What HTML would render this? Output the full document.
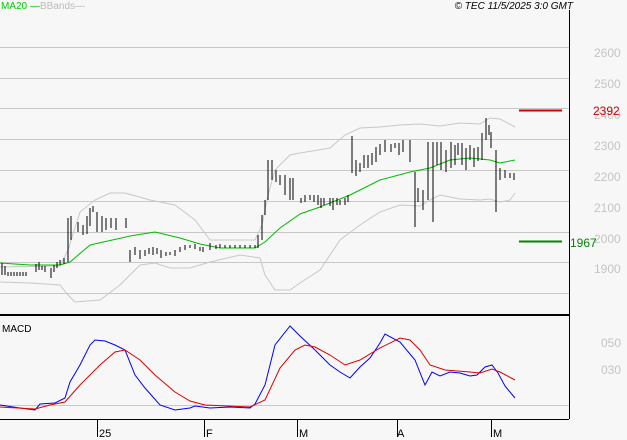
<!DOCTYPE html>
<html><head><style>
body{margin:0;width:627px;height:440px;background:#f7f7f7;overflow:hidden;font-family:"Liberation Sans",sans-serif}
</style></head><body>
<svg width="627" height="440" xmlns="http://www.w3.org/2000/svg" style="position:absolute;left:0;top:0">
<rect width="627" height="440" fill="#f7f7f7"/>
<g stroke="#c8c8c8" stroke-width="1">
<path d="M0,47.5H569M0,78.5H569M0,108.5H569M0,139.5H569M0,170.5H569M0,201.5H569M0,232.5H569M0,262.5H569M0,293.5H569M0,405.5H569"/>
</g>
<path d="M569.5,10V419" stroke="#000"/>
<path d="M0,315H569" stroke="#000" stroke-width="2"/>
<path d="M0,419.5H569" stroke="#000"/>
<path d="M97.5,419V437M204.5,419V437M297.5,419V437M397.5,419V437M491.5,419V437" stroke="#000"/>
<g font-size="11" fill="#000">
<text x="99" y="437">25</text><text x="206" y="437">F</text><text x="299" y="437">M</text><text x="397" y="437">A</text><text x="493" y="437">M</text>
</g>
<text x="2" y="332" font-size="10" fill="#000">MACD</text>
<g font-size="12" fill="#c4c4c4">
<text x="594" y="57">2600</text><text x="594" y="88">2500</text><text x="594" y="119">2400</text><text x="594" y="150">2300</text><text x="594" y="181">2200</text><text x="594" y="212">2100</text><text x="594" y="243">2000</text><text x="594" y="273">1900</text>
<text x="601" y="347">050</text><text x="601" y="374">030</text>
</g>
<path d="M519,110.5H562" stroke="#c00" stroke-width="2"/>
<text x="593" y="115" font-size="12" fill="#c00">2392</text>
<path d="M519,241.5H562" stroke="#080" stroke-width="2"/>
<text x="570" y="247" font-size="12" fill="#080">1967</text>
<text x="1" y="9" font-size="10" fill="#0c0">MA20 —</text>
<text x="40" y="9" font-size="10" fill="#bbb">BBands—</text>
<text x="573" y="9" font-size="10" fill="#000" font-style="italic" text-anchor="end">© TEC 11/5/2025 3:0 GMT</text>
<g fill="none" stroke="#c8c8c8">
<polyline points="0,267 60,266 68,250 80,212 95,200 110,193 125,193 150,200 175,205 195,220 210,240 220,240 255,240 262,225 268,195 275,170 290,155 300,153 330,148 345,135 360,128 380,127 400,125 420,124 440,126 460,123 480,124 490,118 500,119 515,127"/>
<polyline points="0,282 30,283 60,285 68,295 75,302 100,300 120,285 140,265 155,263 170,268 190,268 210,262 240,255 260,258 265,275 275,290 290,290 300,283 320,270 340,240 360,225 380,212 400,205 420,206 430,200 440,195 460,199 480,200 490,199 500,202 510,200 515,193"/>
</g>
<polyline fill="none" stroke="#0b0" points="0,263 30,265 60,265 70,262 90,245 130,236 155,232 180,238 200,244 220,248 255,248 265,242 280,228 300,214 320,207 350,195 380,180 410,172 430,168 450,160 470,158 490,160 500,163 515,160"/>
<path stroke="#000" stroke-width="1.2" shape-rendering="crispEdges" fill="none" d="M2,263V275M5,266V275M8,272V276M11,272V276M14,272V276M17,272V276M20,272V276M23,272V276M26,272V276M36,264V272M39,262V270M42,266V270M45,266V272M51,268V278M54,265V272M57,262V268M60,260V265M64,258V264M68,218V262M71,216V240M78,222V232M83,225V235M87,216V234M90,208V226M93,206V212M97,212V232M102,216V232M106,218V230M111,218V228M116,218V230M126,218V228M130,250V262M135,247V255M140,250V259M145,250V256M149,248V254M153,247V255M157,248V254M161,250V258M166,252V256M170,252V255M175,250V256M180,247V252M185,245V250M190,245V248M195,244V249M200,247V251M203,247V252M210,243V250M216,245V249M220,244V248M225,245V248M230,245V248M235,245V248M240,245V248M245,245V248M250,245V248M255,245V248M258,235V248M262,215V240M265,200V215M268,160V200M272,160V180M276,170V182M280,175V185M285,175V195M290,178V200M293,178V200M301,198V203M305,195V202M310,195V200M314,195V202M318,195V205M321,198V208M324,198V205M330,198V206M333,198V210M337,198V205M340,200V205M345,198V205M348,195V202M352,136V173M356,160V176M360,163V172M364,155V168M368,155V168M372,153V165M376,147V162M380,144V155M385,140V152M391,144V152M395,143V148M399,143V155M403,140V152M410,140V162M415,172V227M418,188V202M423,190V210M428,142V200M433,142V222M437,142V165M441,142V170M446,150V172M451,142V168M455,145V165M458,143V155M462,143V165M466,148V170M470,145V160M474,148V167M478,147V161M482,133V160M486,118V140M489,125V135M491,132V148M496,150V212M500,168V180M505,170V178M510,173V178M514,173V180"/>
<polyline fill="none" stroke="#00f" points="0,405 20,408 35,410 40,404 55,403 65,398 70,382 80,365 90,345 95,340 105,341 115,345 125,350 135,375 145,388 160,405 175,410 190,408 195,406 210,408 230,407 250,408 255,404 265,385 275,345 290,326 300,336 315,350 330,365 340,372 350,378 360,367 370,358 380,343 385,334 400,342 415,360 425,385 432,372 440,376 450,372 460,373 470,376 477,375 485,367 492,365 498,373 505,386 515,398"/>
<polyline fill="none" stroke="#d00" points="0,407 35,409 50,405 65,402 80,385 100,365 115,352 125,350 140,360 155,375 175,392 190,401 205,405 250,407 265,400 280,368 295,350 305,345 315,347 330,355 345,365 360,360 380,348 400,338 410,340 420,350 430,365 445,370 470,372 480,373 492,369 500,372 515,380"/>
</svg>
</body></html>
